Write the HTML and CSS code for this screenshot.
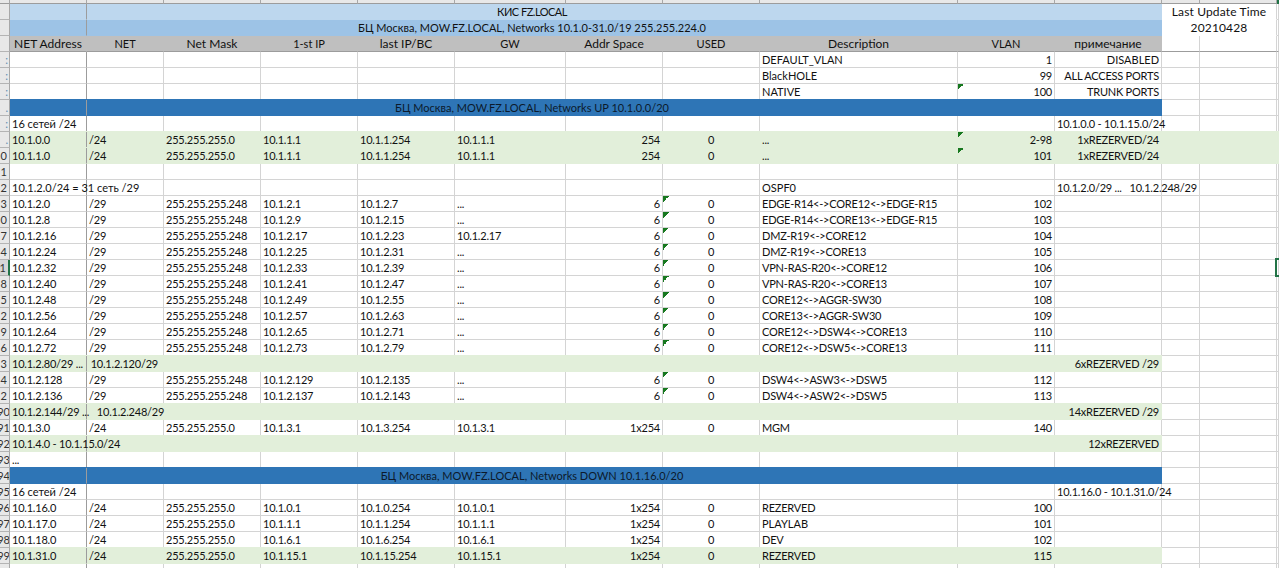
FILE: index.html
```html
<!DOCTYPE html>
<html lang="ru">
<head>
  <meta charset="UTF-8">
  <title>КИС FZ.LOCAL</title>
  <link rel="stylesheet" href="styles.css">
</head>
<body>
  <div class="sheet">
    <table class="grid">
      <colgroup>
        <col class="w-rh"><col class="w-a"><col class="w-a"><col class="w-ip"><col class="w-ip"><col class="w-ip"><col class="w-space"><col class="w-ip"><col class="w-ip"><col class="w-desc"><col class="w-ip"><col class="w-note"><col class="w-l"><col class="w-m"><col class="w-n">
      </colgroup>
      <tbody>
        <tr class="strip"><td class="rh"></td><td></td><td></td><td></td><td></td><td></td><td></td><td></td><td></td><td></td><td></td><td></td><td></td><td></td><td class="strip-sel"></td></tr>

        <tr class="title1"><td class="rh"></td><td class="pane"></td><td class="merged" colspan="10">КИС FZ.LOCAL</td><td class="update" colspan="2">Last Update Time</td><td class="n"></td></tr>
        <tr class="title2"><td class="rh"></td><td class="pane"></td><td class="merged" colspan="10">БЦ Москва, MOW.FZ.LOCAL, Networks 10.1.0-31.0/19 255.255.224.0</td><td class="update" colspan="2">20210428</td><td class="n"></td></tr>
        <tr class="head"><td class="rh"></td><td class="pane">NET Address</td><td class="caps">NET</td><td>Net Mask</td><td class="caps">1-st IP</td><td>last IP/BC</td><td class="caps">GW</td><td>Addr Space</td><td class="caps">USED</td><td>Description</td><td class="caps">VLAN</td><td>примечание</td><td class="off"></td><td class="off"></td><td class="off"></td></tr>

        <tr><td class="rh mark">:</td><td class="pane"></td><td></td><td></td><td></td><td></td><td></td><td></td><td></td><td class="plain">DEFAULT_VLAN</td><td class="r">1</td><td class="r plain">DISABLED</td><td></td><td></td><td></td></tr>
        <tr><td class="rh mark">:</td><td class="pane"></td><td></td><td></td><td></td><td></td><td></td><td></td><td></td><td class="plain">BlackHOLE</td><td class="r">99</td><td class="r">ALL ACCESS PORTS</td><td></td><td></td><td></td></tr>
        <tr><td class="rh mark">:</td><td class="pane"></td><td></td><td></td><td></td><td></td><td></td><td></td><td></td><td class="plain">NATIVE</td><td class="r tri">100</td><td class="r">TRUNK PORTS</td><td></td><td></td><td></td></tr>

        <tr class="section"><td class="rh mark">.</td><td class="pane"></td><td class="merged" colspan="10">БЦ Москва, MOW.FZ.LOCAL, Networks UP 10.1.0.0/20</td><td></td><td></td><td></td></tr>
        <tr><td class="rh mark">:</td><td class="pane plain">16 сетей /24</td><td></td><td></td><td></td><td></td><td></td><td></td><td></td><td></td><td></td><td>10.1.0.0 - 10.1.15.0/24</td><td></td><td></td><td></td></tr>
        <tr class="free"><td class="rh mark">.</td><td class="pane">10.1.0.0</td><td>/24</td><td>255.255.255.0</td><td>10.1.1.1</td><td>10.1.1.254</td><td>10.1.1.1</td><td class="r">254</td><td class="c">0</td><td>...</td><td class="r tri">2-98</td><td class="r">1xREZERVED/24</td><td></td><td></td><td></td></tr>
        <tr class="free"><td class="rh">0</td><td class="pane">10.1.1.0</td><td>/24</td><td>255.255.255.0</td><td>10.1.1.1</td><td>10.1.1.254</td><td>10.1.1.1</td><td class="r">254</td><td class="c">0</td><td>...</td><td class="r tri">101</td><td class="r">1xREZERVED/24</td><td></td><td></td><td></td></tr>
        <tr><td class="rh">1</td><td class="pane"></td><td></td><td></td><td></td><td></td><td></td><td></td><td></td><td></td><td></td><td></td><td></td><td></td><td></td></tr>
        <tr><td class="rh">2</td><td class="pane plain">10.1.2.0/24 = 31 сеть /29</td><td></td><td></td><td></td><td></td><td></td><td></td><td></td><td class="plain">OSPF0</td><td></td><td>10.1.2.0/29 ...   10.1.2.248/29</td><td></td><td></td><td></td></tr>

        <tr><td class="rh">3</td><td class="pane">10.1.2.0</td><td>/29</td><td>255.255.255.248</td><td>10.1.2.1</td><td>10.1.2.7</td><td>...</td><td class="r">6</td><td class="c tri">0</td><td>EDGE-R14&lt;-&gt;CORE12&lt;-&gt;EDGE-R15</td><td class="r">102</td><td></td><td></td><td></td><td></td></tr>
        <tr><td class="rh">0</td><td class="pane">10.1.2.8</td><td>/29</td><td>255.255.255.248</td><td>10.1.2.9</td><td>10.1.2.15</td><td>...</td><td class="r">6</td><td class="c tri">0</td><td>EDGE-R14&lt;-&gt;CORE13&lt;-&gt;EDGE-R15</td><td class="r">103</td><td></td><td></td><td></td><td></td></tr>
        <tr><td class="rh">7</td><td class="pane">10.1.2.16</td><td>/29</td><td>255.255.255.248</td><td>10.1.2.17</td><td>10.1.2.23</td><td>10.1.2.17</td><td class="r">6</td><td class="c tri">0</td><td>DMZ-R19&lt;-&gt;CORE12</td><td class="r">104</td><td></td><td></td><td></td><td></td></tr>
        <tr><td class="rh">4</td><td class="pane">10.1.2.24</td><td>/29</td><td>255.255.255.248</td><td>10.1.2.25</td><td>10.1.2.31</td><td>...</td><td class="r">6</td><td class="c tri">0</td><td>DMZ-R19&lt;-&gt;CORE13</td><td class="r">105</td><td></td><td></td><td></td><td></td></tr>
        <tr><td class="rh sel">1</td><td class="pane">10.1.2.32</td><td>/29</td><td>255.255.255.248</td><td>10.1.2.33</td><td>10.1.2.39</td><td>...</td><td class="r">6</td><td class="c tri">0</td><td>VPN-RAS-R20&lt;-&gt;CORE12</td><td class="r">106</td><td></td><td></td><td></td><td></td></tr>
        <tr><td class="rh">8</td><td class="pane">10.1.2.40</td><td>/29</td><td>255.255.255.248</td><td>10.1.2.41</td><td>10.1.2.47</td><td>...</td><td class="r">6</td><td class="c tri">0</td><td>VPN-RAS-R20&lt;-&gt;CORE13</td><td class="r">107</td><td></td><td></td><td></td><td></td></tr>
        <tr><td class="rh">5</td><td class="pane">10.1.2.48</td><td>/29</td><td>255.255.255.248</td><td>10.1.2.49</td><td>10.1.2.55</td><td>...</td><td class="r">6</td><td class="c tri">0</td><td>CORE12&lt;-&gt;AGGR-SW30</td><td class="r">108</td><td></td><td></td><td></td><td></td></tr>
        <tr><td class="rh">2</td><td class="pane">10.1.2.56</td><td>/29</td><td>255.255.255.248</td><td>10.1.2.57</td><td>10.1.2.63</td><td>...</td><td class="r">6</td><td class="c tri">0</td><td>CORE13&lt;-&gt;AGGR-SW30</td><td class="r">109</td><td></td><td></td><td></td><td></td></tr>
        <tr><td class="rh">9</td><td class="pane">10.1.2.64</td><td>/29</td><td>255.255.255.248</td><td>10.1.2.65</td><td>10.1.2.71</td><td>...</td><td class="r">6</td><td class="c tri">0</td><td>CORE12&lt;-&gt;DSW4&lt;-&gt;CORE13</td><td class="r">110</td><td></td><td></td><td></td><td></td></tr>
        <tr><td class="rh">6</td><td class="pane">10.1.2.72</td><td>/29</td><td>255.255.255.248</td><td>10.1.2.73</td><td>10.1.2.79</td><td>...</td><td class="r">6</td><td class="c tri">0</td><td>CORE12&lt;-&gt;DSW5&lt;-&gt;CORE13</td><td class="r">111</td><td></td><td></td><td></td><td></td></tr>
        <tr class="res"><td class="rh">3</td><td class="pane">10.1.2.80/29 ...   10.1.2.120/29</td><td></td><td></td><td></td><td></td><td></td><td></td><td></td><td></td><td></td><td class="r">6xREZERVED /29</td><td></td><td></td><td></td></tr>
        <tr><td class="rh">4</td><td class="pane">10.1.2.128</td><td>/29</td><td>255.255.255.248</td><td>10.1.2.129</td><td>10.1.2.135</td><td>...</td><td class="r">6</td><td class="c tri">0</td><td>DSW4&lt;-&gt;ASW3&lt;-&gt;DSW5</td><td class="r">112</td><td></td><td></td><td></td><td></td></tr>
        <tr><td class="rh">2</td><td class="pane">10.1.2.136</td><td>/29</td><td>255.255.255.248</td><td>10.1.2.137</td><td>10.1.2.143</td><td>...</td><td class="r">6</td><td class="c tri">0</td><td>DSW4&lt;-&gt;ASW2&lt;-&gt;DSW5</td><td class="r">113</td><td></td><td></td><td></td><td></td></tr>
        <tr class="res"><td class="rh wide">190</td><td class="pane">10.1.2.144/29 ...   10.1.2.248/29</td><td></td><td></td><td></td><td></td><td></td><td></td><td></td><td></td><td></td><td class="r">14xREZERVED /29</td><td></td><td></td><td></td></tr>
        <tr><td class="rh wide">191</td><td class="pane">10.1.3.0</td><td>/24</td><td>255.255.255.0</td><td>10.1.3.1</td><td>10.1.3.254</td><td>10.1.3.1</td><td class="r">1x254</td><td class="c">0</td><td>MGM</td><td class="r">140</td><td></td><td></td><td></td><td></td></tr>
        <tr class="res"><td class="rh wide">192</td><td class="pane">10.1.4.0 - 10.1.15.0/24</td><td></td><td></td><td></td><td></td><td></td><td></td><td></td><td></td><td></td><td class="r">12xREZERVED</td><td></td><td></td><td></td></tr>
        <tr><td class="rh wide">193</td><td class="pane">...</td><td></td><td></td><td></td><td></td><td></td><td></td><td></td><td></td><td></td><td></td><td></td><td></td><td></td></tr>

        <tr class="section"><td class="rh wide">194</td><td class="pane"></td><td class="merged" colspan="10">БЦ Москва, MOW.FZ.LOCAL, Networks DOWN 10.1.16.0/20</td><td></td><td></td><td></td></tr>
        <tr><td class="rh wide">195</td><td class="pane plain">16 сетей /24</td><td></td><td></td><td></td><td></td><td></td><td></td><td></td><td></td><td></td><td>10.1.16.0 - 10.1.31.0/24</td><td></td><td></td><td></td></tr>
        <tr><td class="rh wide">196</td><td class="pane">10.1.16.0</td><td>/24</td><td>255.255.255.0</td><td>10.1.0.1</td><td>10.1.0.254</td><td>10.1.0.1</td><td class="r">1x254</td><td class="c">0</td><td>REZERVED</td><td class="r">100</td><td></td><td></td><td></td><td></td></tr>
        <tr><td class="rh wide">197</td><td class="pane">10.1.17.0</td><td>/24</td><td>255.255.255.0</td><td>10.1.1.1</td><td>10.1.1.254</td><td>10.1.1.1</td><td class="r">1x254</td><td class="c">0</td><td class="plain">PLAYLAB</td><td class="r">101</td><td></td><td></td><td></td><td></td></tr>
        <tr><td class="rh wide">198</td><td class="pane">10.1.18.0</td><td>/24</td><td>255.255.255.0</td><td>10.1.6.1</td><td>10.1.6.254</td><td>10.1.6.1</td><td class="r">1x254</td><td class="c">0</td><td>DEV</td><td class="r">102</td><td></td><td></td><td></td><td></td></tr>
        <tr class="res"><td class="rh wide">199</td><td class="pane">10.1.31.0</td><td>/24</td><td>255.255.255.0</td><td>10.1.15.1</td><td>10.1.15.254</td><td>10.1.15.1</td><td class="r">1x254</td><td class="c">0</td><td>REZERVED</td><td class="r">115</td><td></td><td></td><td></td><td></td></tr>
        <tr><td class="rh"></td><td class="pane"></td><td></td><td></td><td></td><td></td><td></td><td></td><td></td><td></td><td></td><td></td><td></td><td></td><td></td></tr>
      </tbody>
    </table>
    <div class="active-cell"></div>
  </div>
</body>
</html>
```

FILE: styles.css
```css
*{
  box-sizing: border-box;
  margin: 0;
  padding: 0;
}

html, body{
  height: 100%;
  overflow: hidden;
  background-color: #fff;
}

.sheet{
  position: relative;
  width: 1279px;
  height: 568px;
  overflow: hidden;
}

.grid{
  table-layout: fixed;
  width: 1279px;
  border-collapse: separate;
  border-spacing: 0;
  font-family: "Lato", "Liberation Sans", sans-serif;
  font-size: 11px;
  line-height: 15px;
  color: #111;
}

.w-rh{ width: 10px; }
.w-a{ width: 77px; }
.w-ip{ width: 97px; }
.w-space{ width: 111px; }
.w-desc{ width: 198px; }
.w-note{ width: 107px; }
.w-l{ width: 38px; }
.w-m{ width: 77px; }
.w-n{ width: 2px; }

.grid tr{
  height: 16px;
}

/* Lato digits run wider than the sheet's font, so data cells are tightened */
.grid td{
  height: 16px;
  padding: 0 2px;
  white-space: pre;
  vertical-align: middle;
  letter-spacing: -0.22px;
  border-right: 1px solid #d4d4d4;
  border-bottom: 1px solid #d4d4d4;
}

.grid td.plain{
  letter-spacing: 0;
}

.grid td.pane{
  border-right-color: #9c9c9c;
}

.r{ text-align: right; }
.c{ text-align: center; }

.tri{
  background-image: linear-gradient(135deg, #17781f 50%, transparent 50%);
  background-repeat: no-repeat;
  background-size: 6px 6px;
}

/* column header strip */
.grid tr.strip{
  height: 4px;
}

.grid tr.strip td{
  height: 4px;
  padding: 0;
  font-size: 0;
  line-height: 0;
  background-color: #e8e8e8;
  border-right-color: #a8a8a8;
  border-bottom-color: #9c9c9c;
}

.grid tr.strip td.strip-sel{
  background-color: #217346;
  border-color: #217346;
}

/* row headers */
.grid td.rh{
  padding: 0 2px 0 0;
  overflow: hidden;
  direction: rtl;
  font-size: 11px;
  letter-spacing: 0;
  color: #333;
  background-color: #e8e8e8;
  border-right-color: #a8a8a8;
  border-bottom-color: #b4b4b4;
  box-shadow: none;
}

.grid td.rh.wide{
  padding-right: 0;
}

.grid td.rh.mark{
  padding-right: 1px;
  color: #5f8db0;
}

.grid td.rh.sel{
  background-color: #d6d6d6;
  border-right: 2px solid #217346;
}

/* merged title rows */
.grid td.merged{
  text-align: center;
  padding-right: 187px;
  letter-spacing: 0;
}

.title1 td:nth-child(n+2):nth-child(-n+3){
  background-color: #bdd7ee;
  border-bottom-color: #bdd7ee;
}

.title2 td:nth-child(n+2):nth-child(-n+3){
  background-color: #9dc3e6;
  border-bottom-color: #9dc3e6;
}

.grid .title1 td.merged{
  letter-spacing: -0.5px;
}

.title1 td.merged, .title2 td.merged{
  border-right: 0;
}

.grid td.update{
  text-align: center;
  font-size: 12px;
  letter-spacing: 0.15px;
  border-bottom-color: #fff;
}

.grid .head td:nth-child(n+2){
  text-align: center;
  font-size: 12px;
  letter-spacing: 0;
  background-color: #bfbfbf;
  border-right-color: #bfbfbf;
  border-bottom-color: #9c9c9c;
}

.grid .head td.caps:nth-child(n+2){
  font-size: 11px;
}

.grid tr.head td.off{
  background-color: #fff;
  border-right-color: #d4d4d4;
}

/* dark blue section bars */
.section td:nth-child(2), .section td.merged{
  background-color: #2e75b6;
  border-bottom-color: #2e75b6;
  box-shadow: 0 -1px 0 #2e75b6;
}

.grid .section td.merged{
  border-right: 0;
  color: #0c1a2c;
}

/* green rows: free rows run to the sheet edge, reserved rows stop at the note column */
.free td:nth-child(n+2), .res td:nth-child(n+2):nth-child(-n+12){
  background-color: #e2efda;
  border-right-color: #e2efda;
  border-bottom-color: #e2efda;
  box-shadow: 0 -1px 0 #e2efda;
}

.grid .free td.pane, .grid .res td.pane{
  border-right-color: #9c9c9c;
}

/* selected cell, mostly scrolled off the right edge */
.active-cell{
  position: absolute;
  left: 1275px;
  top: 258px;
  width: 10px;
  height: 19px;
  border: 2px solid #217346;
}
```
